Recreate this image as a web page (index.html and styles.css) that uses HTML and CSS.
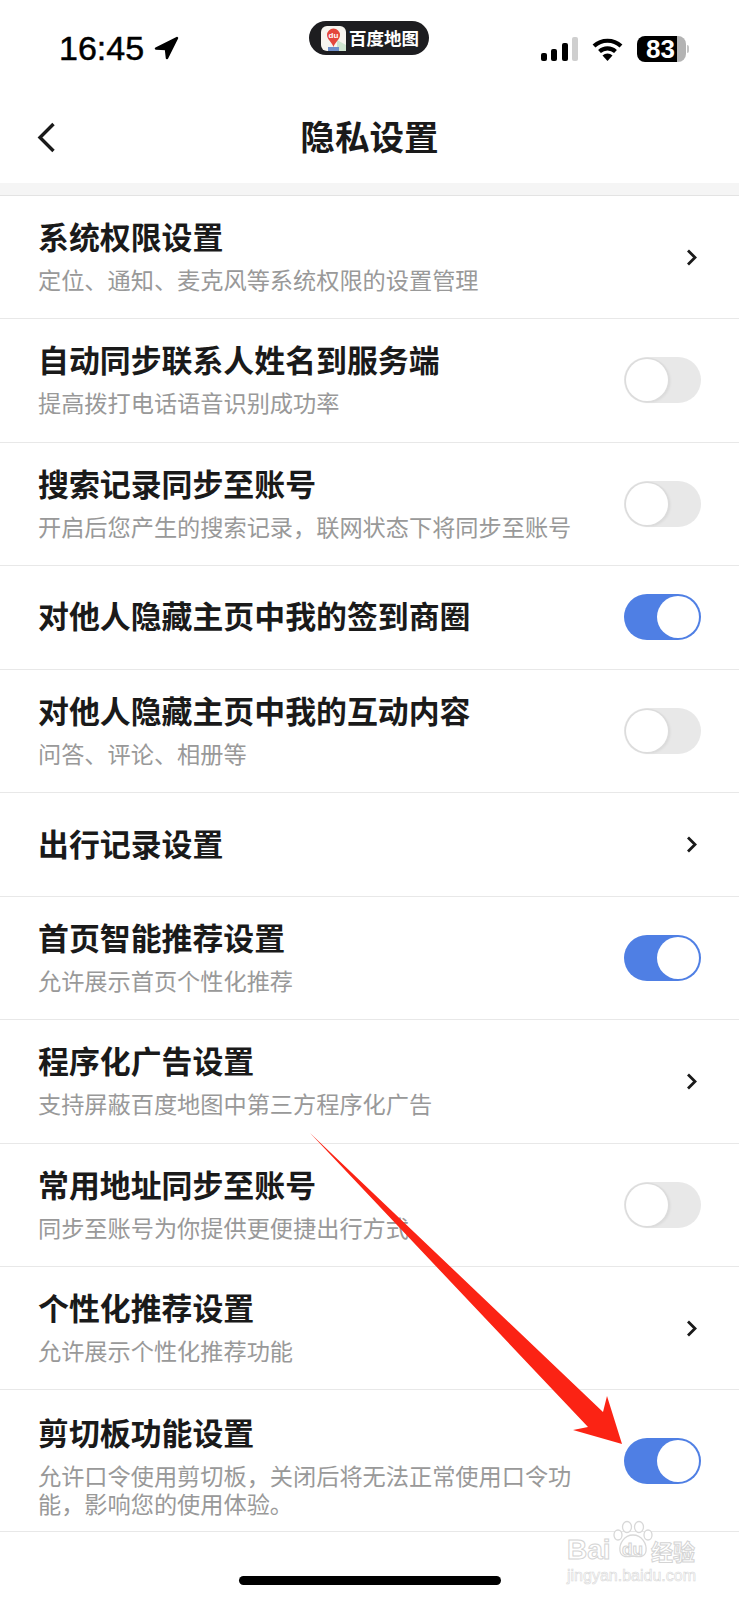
FILE: index.html
```html
<!DOCTYPE html>
<html lang="zh-CN">
<head>
  <meta charset="UTF-8" />
  <title>隐私设置</title>
  <link rel="stylesheet" href="styles.css">
</head>
<body>
  <div class="pantalla">
    <!-- barra de estado -->
    <div class="estado">
      <div class="hora">
        <span>16:45</span>
        <svg class="flecha-gps" width="25" height="24" viewBox="0 0 25 24"><path d="M23 2 L2 12.5 L12 13 L13 22 Z" fill="#000" stroke="#000" stroke-width="2.5" stroke-linejoin="round"/></svg>
      </div>
      <div class="pastilla">
        <svg class="app-icono" width="25" height="25" viewBox="0 0 25 25">
          <rect width="25" height="25" rx="6" fill="#f6f4ef"/>
          <path d="M16 14 L25 19 V25 H16 Z" fill="#cfe5d0"/>
          <rect x="7" y="21" width="11" height="4" fill="#6f8fc9"/>
          <path d="M12.5 21 C11 16 6 13.5 6 9 A6.5 6.5 0 0 1 19 9 C19 13.5 14 16 12.5 21 Z" fill="#e4473c"/>
          <text class="app-du" x="12.5" y="11.5" text-anchor="middle">du</text>
        </svg>
        <span class="app-nombre">百度地图</span>
      </div>
      <div class="estado-der">
        <div class="senal">
          <i class="b1"></i><i class="b2"></i><i class="b3"></i><i class="b4"></i>
        </div>
        <svg width="31" height="24" viewBox="0 0 31 24">
          <path d="M2 9 A20 20 0 0 1 29 9" fill="none" stroke="#000" stroke-width="4.2"/>
          <path d="M7.5 14.5 A12 12 0 0 1 23.5 14.5" fill="none" stroke="#000" stroke-width="4.2"/>
          <path d="M10.5 18.5 A7.5 7.5 0 0 1 20.5 18.5 L15.5 24 Z" fill="#000"/>
        </svg>
        <div class="bateria">
          <div class="bateria-cuerpo"><span>83</span></div>
          <div class="bateria-punta"></div>
        </div>
      </div>
    </div>

    <!-- cabecera -->
    <div class="cabecera">
      <svg class="volver" width="19" height="31" viewBox="0 0 19 31"><path d="M16.5 2 L3 15.5 L16.5 29" fill="none" stroke="#1a1a1a" stroke-width="3.4"/></svg>
      <h1>隐私设置</h1>
    </div>
    <div class="separador"></div>

    <!-- lista de ajustes -->
    <div class="lista">
      <div class="fila">
        <div class="fila-texto">
          <div class="titulo">系统权限设置</div>
          <div class="detalle">定位、通知、麦克风等系统权限的设置管理</div>
        </div>
        <svg class="chevron" width="13" height="17" viewBox="0 0 13 17"><path d="M3 1.5 L10 8.5 L3 15.5" fill="none" stroke="#1a1a1a" stroke-width="2.8"/></svg>
      </div>
      <div class="fila">
        <div class="fila-texto">
          <div class="titulo">自动同步联系人姓名到服务端</div>
          <div class="detalle">提高拨打电话语音识别成功率</div>
        </div>
        <div class="interruptor"><div class="bola"></div></div>
      </div>
      <div class="fila">
        <div class="fila-texto">
          <div class="titulo">搜索记录同步至账号</div>
          <div class="detalle">开启后您产生的搜索记录，联网状态下将同步至账号</div>
        </div>
        <div class="interruptor"><div class="bola"></div></div>
      </div>
      <div class="fila fila-corta">
        <div class="fila-texto">
          <div class="titulo">对他人隐藏主页中我的签到商圈</div>
        </div>
        <div class="interruptor activo"><div class="bola"></div></div>
      </div>
      <div class="fila">
        <div class="fila-texto">
          <div class="titulo">对他人隐藏主页中我的互动内容</div>
          <div class="detalle">问答、评论、相册等</div>
        </div>
        <div class="interruptor"><div class="bola"></div></div>
      </div>
      <div class="fila fila-corta">
        <div class="fila-texto">
          <div class="titulo">出行记录设置</div>
        </div>
        <svg class="chevron" width="13" height="17" viewBox="0 0 13 17"><path d="M3 1.5 L10 8.5 L3 15.5" fill="none" stroke="#1a1a1a" stroke-width="2.8"/></svg>
      </div>
      <div class="fila">
        <div class="fila-texto">
          <div class="titulo">首页智能推荐设置</div>
          <div class="detalle">允许展示首页个性化推荐</div>
        </div>
        <div class="interruptor activo"><div class="bola"></div></div>
      </div>
      <div class="fila">
        <div class="fila-texto">
          <div class="titulo">程序化广告设置</div>
          <div class="detalle">支持屏蔽百度地图中第三方程序化广告</div>
        </div>
        <svg class="chevron" width="13" height="17" viewBox="0 0 13 17"><path d="M3 1.5 L10 8.5 L3 15.5" fill="none" stroke="#1a1a1a" stroke-width="2.8"/></svg>
      </div>
      <div class="fila">
        <div class="fila-texto">
          <div class="titulo">常用地址同步至账号</div>
          <div class="detalle">同步至账号为你提供更便捷出行方式</div>
        </div>
        <div class="interruptor"><div class="bola"></div></div>
      </div>
      <div class="fila">
        <div class="fila-texto">
          <div class="titulo">个性化推荐设置</div>
          <div class="detalle">允许展示个性化推荐功能</div>
        </div>
        <svg class="chevron" width="13" height="17" viewBox="0 0 13 17"><path d="M3 1.5 L10 8.5 L3 15.5" fill="none" stroke="#1a1a1a" stroke-width="2.8"/></svg>
      </div>
      <div class="fila fila-larga">
        <div class="fila-texto">
          <div class="titulo">剪切板功能设置</div>
          <div class="detalle">允许口令使用剪切板，关闭后将无法正常使用口令功能，影响您的使用体验。</div>
        </div>
        <div class="interruptor activo"><div class="bola"></div></div>
      </div>
    </div>

    <div class="barra-inicio"></div>

    <!-- flecha roja encima de la lista -->
    <svg class="flecha-roja" width="739" height="1600" viewBox="0 0 739 1600">
      <path d="M310 1133 L603 1412 L607 1396 L622 1444 L573 1430 L588 1427 Z" fill="#fb2314"/>
    </svg>

    <!-- marca de agua -->
    <div class="marca">
      <svg class="huella" width="40" height="40" viewBox="0 0 40 40">
        <g fill="#fff" stroke="#d8d8d8" stroke-width="1.3">
          <ellipse cx="5" cy="15" rx="4" ry="5"/>
          <ellipse cx="14" cy="7" rx="4.5" ry="5.5"/>
          <ellipse cx="26" cy="7" rx="4.5" ry="5.5"/>
          <ellipse cx="35" cy="15" rx="4" ry="5"/>
          <path d="M20 15 C29 15 34 24 33 31 C32 38 25 37 20 36 C15 37 8 38 7 31 C6 24 11 15 20 15 Z"/>
        </g>
      </svg>
      <div class="marca-linea">
        <span class="marca-bai">Bai</span><span class="marca-du">du</span><span class="marca-cjk">经验</span>
      </div>
      <div class="marca-url">jingyan.baidu.com</div>
    </div>
  </div>
</body>
</html>
```

FILE: styles.css
```css
* { box-sizing: border-box; }
body {
  margin: 0; background: #fff; color: #1a1a1a;
  font-family: "Noto Sans CJK SC", "Liberation Sans", sans-serif;
}
.pantalla { position: relative; width: 739px; height: 1600px; overflow: hidden; background: #fff; }

/* barra de estado */
.estado { height: 90px; display: flex; align-items: flex-start; padding: 21px 50px 0 59px; }
.hora {
  width: 250px; display: flex; align-items: center; gap: 10px; padding-top: 13px;
  font-family: "Liberation Sans", sans-serif; font-size: 34px; line-height: 28px; color: #000;
  -webkit-text-stroke: 0.5px #000;
}
.pastilla {
  width: 120px; height: 34px; border-radius: 17px; background: #1d1d20;
  display: flex; align-items: center; gap: 3px; padding-left: 12px;
}
.app-icono { flex-shrink: 0; }
.app-du { font-family: "Liberation Sans", sans-serif; font-size: 8px; font-weight: 700; fill: #fff; }
.app-nombre { font-size: 17.5px; line-height: 20px; font-weight: 700; color: #fff; white-space: nowrap; }
.estado-der { margin-left: auto; display: flex; align-items: center; padding-top: 15px; gap: 14px; }
.senal { display: flex; align-items: flex-end; gap: 4.3px; height: 24px; }
.senal i { display: block; width: 6px; background: #000; border-radius: 2px; }
.senal .b1 { height: 8px; }
.senal .b2 { height: 12px; }
.senal .b3 { height: 18px; }
.senal .b4 { height: 24px; background: #cfcfcf; }
.bateria { display: flex; align-items: center; gap: 1px; }
.bateria-cuerpo {
  width: 49px; height: 26px; border-radius: 8px;
  background: linear-gradient(90deg, #000 0, #000 40px, #b3b3b3 40px);
  display: flex; align-items: center; padding-left: 9px;
  font-family: "Liberation Sans", sans-serif; font-size: 26px; font-weight: 700; color: #fff;
}
.bateria-punta { width: 2px; height: 8px; background: #c4c4c4; border-radius: 0 2px 2px 0; }

/* cabecera */
.cabecera { position: relative; height: 93px; display: flex; align-items: center; justify-content: center; }
.cabecera h1 { margin: 0; font-size: 34.6px; line-height: 46px; font-weight: 700; color: #1a1a1a; padding-bottom: 4px; }
.volver { position: absolute; left: 37px; top: 32px; }
.separador { height: 13px; background: #f5f5f5; border-bottom: 1px solid #e3e3e3; }

/* lista: el texto lleva su propio relleno y el control queda centrado en la fila */
.fila {
  display: flex; align-items: center; justify-content: space-between;
  padding: 0 38px; border-bottom: 1px solid #e8e8e8;
}
.fila-texto { max-width: 546px; padding: 21px 0 25.3px; }
.fila-corta { min-height: 104px; }
.fila-corta .fila-texto { padding: 0 0 4px; }
.fila-larga .fila-texto { padding: 23px 0 13.3px; }
.titulo { font-size: 30.9px; line-height: 38px; font-weight: 700; color: #1a1a1a; white-space: nowrap; }
.detalle { margin-top: 10px; font-size: 23.2px; line-height: 28px; color: #999; }
.chevron { margin-right: 3px; flex-shrink: 0; }

.interruptor {
  width: 77px; height: 46px; border-radius: 23px; background: #e8e8e8; flex-shrink: 0;
  padding: 2px; display: flex; justify-content: flex-start;
}
.bola { width: 42px; height: 42px; border-radius: 50%; background: #fff; box-shadow: 0 0 0 1.5px #dcdcdc, 2px 1px 3px rgba(0, 0, 0, 0.08); }
.interruptor.activo { background: #4f7fe4; justify-content: flex-end; }
.interruptor.activo .bola { box-shadow: none; }

.barra-inicio {
  position: absolute; left: 239px; top: 1576px;
  width: 262px; height: 9px; border-radius: 5px; background: #000;
}
.flecha-roja { position: absolute; left: 0; top: 0; pointer-events: none; }

/* marca de agua */
.marca { position: absolute; left: 567px; top: 1520px; width: 135px; height: 64px; color: #fff; }
.huella { position: absolute; left: 46px; top: 0; }
.marca-linea {
  position: absolute; left: 0; top: 15px; width: 135px; display: flex; align-items: center;
  font-family: "Liberation Sans", sans-serif; font-size: 28px; line-height: 30px; font-weight: 700;
  color: #fff; -webkit-text-stroke: 1px #d4d4d4; white-space: nowrap;
}
.marca-bai { width: 44px; }
.marca-du { margin-left: 11px; width: 21px; font-size: 17px; }
.marca-cjk { margin-left: 8px; font-family: "Noto Sans CJK SC", sans-serif; font-size: 22px; }
.marca-url {
  position: absolute; left: 0; top: 47px; white-space: nowrap;
  font-family: "Liberation Sans", sans-serif; font-size: 16px; line-height: 18px;
  color: #fff; -webkit-text-stroke: 0.6px #d8d8d8;
}
```
